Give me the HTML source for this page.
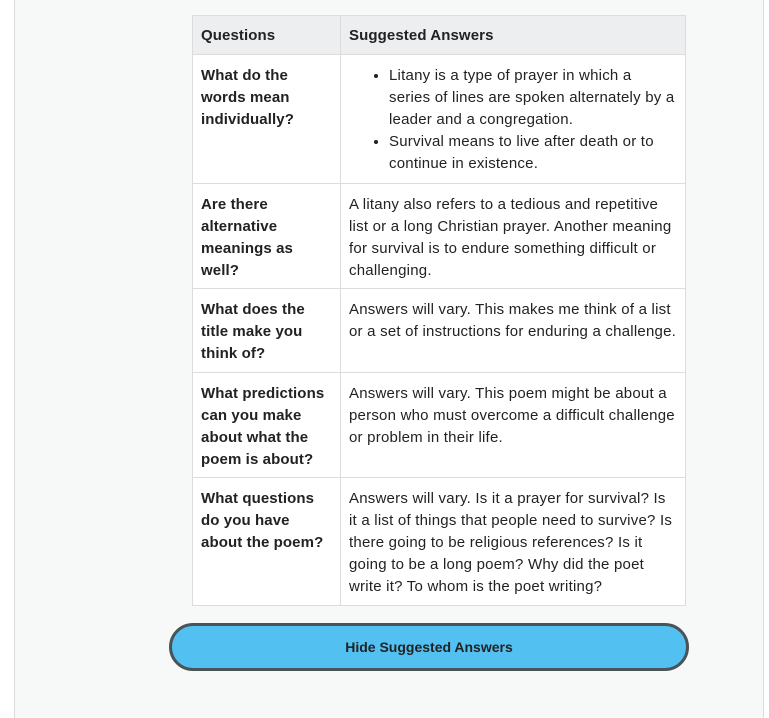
<!DOCTYPE html>
<html><head><style>
html,body{margin:0;padding:0;width:769px;height:681px;overflow:hidden;background:#fff;}
.wrap{position:absolute;left:14px;top:-2px;width:748px;height:720px;background:#f7f9f9;border-left:1px solid #d9dddd;border-right:1px solid #d9dddd;}
table{position:absolute;left:192px;top:15px;width:494px;border-collapse:collapse;font-family:"Liberation Sans",sans-serif;font-size:15px;line-height:22px;color:#222;background:#fff;letter-spacing:0.22px;}
td,th{border:1px solid #dcdcdc;vertical-align:top;padding:10px 8px 0 8px;text-align:left;white-space:nowrap;}
th{background:#eceef0;font-weight:bold;padding:9px 8px 0 8px;letter-spacing:0.1px;}
td.q{font-weight:bold;width:131px;letter-spacing:0.1px;}
ul{margin:0;padding-left:40px;}
.btn{position:absolute;left:169px;top:623px;width:514px;height:42px;border:3px solid #4a5358;border-radius:24px;background:#52c0f0;font-family:"Liberation Sans",sans-serif;font-weight:bold;font-size:14px;color:#222;text-align:center;line-height:42px;}
</style></head><body>
<div class="wrap"></div>
<table>
<tr style="height:39px"><th>Questions</th><th>Suggested Answers</th></tr>
<tr style="height:129px"><td class="q">What do the<br>words mean<br>individually?</td><td><ul><li>Litany is a type of prayer in which a<br>series of lines are spoken alternately by a<br>leader and a congregation.</li><li>Survival means to live after death or to<br>continue in existence.</li></ul></td></tr>
<tr style="height:105px"><td class="q">Are there<br>alternative<br>meanings as<br>well?</td><td>A litany also refers to a tedious and repetitive<br>list or a long Christian prayer. Another meaning<br>for survival is to endure something difficult or<br>challenging.</td></tr>
<tr style="height:84px"><td class="q">What does the<br>title make you<br>think of?</td><td>Answers will vary. This makes me think of a list<br>or a set of instructions for enduring a challenge.</td></tr>
<tr style="height:105px"><td class="q">What predictions<br>can you make<br>about what the<br>poem is about?</td><td>Answers will vary. This poem might be about a<br>person who must overcome a difficult challenge<br>or problem in their life.</td></tr>
<tr style="height:128px"><td class="q">What questions<br>do you have<br>about the poem?</td><td>Answers will vary. Is it a prayer for survival? Is<br>it a list of things that people need to survive? Is<br>there going to be religious references? Is it<br>going to be a long poem? Why did the poet<br>write it? To whom is the poet writing?</td></tr>
</table>
<div class="btn">Hide Suggested Answers</div>
</body></html>
